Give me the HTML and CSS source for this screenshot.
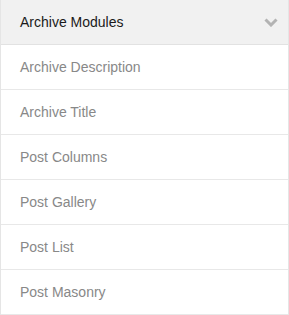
FILE: index.html
```html
<!DOCTYPE html>
<html lang="en">
<head>
  <meta charset="UTF-8">
  <meta name="viewport" content="width=device-width, initial-scale=1.0">
  <title>Archive Modules</title>
  <link rel="stylesheet" href="styles.css">
</head>
<body>
  <div class="panel">
    <div class="panel-header">
      <span>Archive Modules</span>
      <svg class="chevron" width="14" height="9" viewBox="0 0 14 9">
        <path d="M1.5 1.5 L7 7 L12.5 1.5" fill="none" stroke="#b3b3b3" stroke-width="3"/>
      </svg>
    </div>
    <ul class="module-list">
      <li>Archive Description</li>
      <li>Archive Title</li>
      <li>Post Columns</li>
      <li>Post Gallery</li>
      <li>Post List</li>
      <li>Post Masonry</li>
    </ul>
  </div>
</body>
</html>
```

FILE: styles.css
```css
body {
  margin: 0;
  font-family: 'Liberation Sans', Arial, Helvetica, sans-serif;
  background-color: #fff;
}

.panel {
  width: 289px;
  box-sizing: border-box;
  border-left: 1px solid #e5e5e5;
  border-right: 1px solid #e5e5e5;
}

.panel-header {
  height: 44px;
  display: flex;
  align-items: center;
  justify-content: space-between;
  padding: 0 10px 0 19px;
  background-color: #f1f1f1;
  border-bottom: 1px solid #e2e2e2;
  font-size: 14px;
  color: #1a1a1a;
}

.module-list {
  list-style: none;
  margin: 0;
  padding: 0;
}

.module-list li {
  height: 44px;
  display: flex;
  align-items: center;
  padding-left: 19px;
  border-bottom: 1px solid #e8e8e8;
  font-size: 14px;
  color: #888;
}
```
